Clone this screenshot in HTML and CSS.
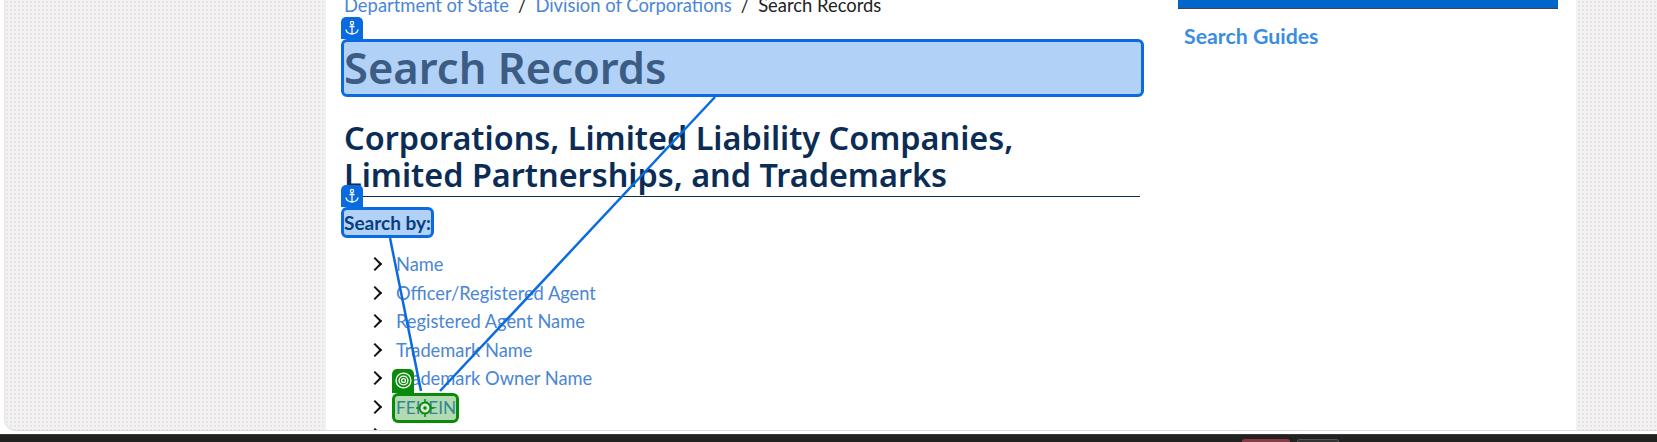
FILE: index.html
```html
<!DOCTYPE html>
<html lang="en">

<head>
    <meta charset="UTF-8">
    <meta name="viewport" content="width=device-width, initial-scale=1.0">
    <title>Search Records</title>
    <link rel="stylesheet" href="styles.css">
</head>

<body>
    <div class="window">
        <div class="page">
            <main class="content">
                <nav class="crumbs">
                    <a href="#">Department of State</a><span class="sep">/</span><a href="#">Division of Corporations</a><span class="sep">/</span><span>Search Records</span>
                </nav>

                <h1 class="title">
                    Search Records
                    <span class="hl hl-blue"></span>
                    <span class="tab tab-blue">
                        <svg viewBox="0 0 16 16" width="16" height="16"><circle cx="8" cy="3" r="1.6" fill="none" stroke="#fff" stroke-width="1.2"/><path d="M8 4.6V14M5.5 6.500h5M2 9.500c.3 2.800 3 4.300 6 4.500 3-.2 5.700-1.700 6-4.500" fill="none" stroke="#fff" stroke-width="1.300"/></svg>
                    </span>
                </h1>

                <h2 class="subtitle">Corporations, Limited Liability Companies,<br>Limited Partnerships, and Trademarks</h2>

                <h3 class="search-by">
                    Search by:
                    <span class="hl hl-blue"></span>
                    <span class="tab tab-blue">
                        <svg viewBox="0 0 16 16" width="16" height="16"><circle cx="8" cy="3" r="1.6" fill="none" stroke="#fff" stroke-width="1.2"/><path d="M8 4.6V14M5.5 6.500h5M2 9.500c.3 2.800 3 4.300 6 4.500 3-.2 5.700-1.700 6-4.500" fill="none" stroke="#fff" stroke-width="1.300"/></svg>
                    </span>
                </h3>

                <ul class="links">
                    <li><a href="#">Name</a></li>
                    <li><a href="#">Officer/Registered Agent</a></li>
                    <li><a href="#">Registered Agent Name</a></li>
                    <li><a href="#">Trademark Name</a></li>
                    <li><a href="#">Trademark Owner Name</a></li>
                    <li>
                        <a href="#" class="target">
                            FEI/EIN
                            <span class="hl hl-green"></span>
                            <span class="tab tab-green">
                                <svg viewBox="0 0 16 16" width="17" height="17" fill="none" stroke="#fff"><circle cx="8" cy="8" r="7" stroke-width="1.200"/><circle cx="8" cy="8" r="4.200" stroke-width="1.200"/><circle cx="8" cy="8" r="1.800" stroke-width="1.200"/></svg>
                            </span>
                            <svg class="cross" viewBox="0 0 18 18" width="18" height="18" fill="none" stroke="#0a8a0a"><circle cx="9" cy="9" r="5.500" fill="#d8ecd8" stroke-width="2"/><circle cx="9" cy="9" r="1.800" fill="#0a8a0a" stroke="none"/><path d="M9 0v3.500M9 14.500V18M0 9h3.500M14.500 9H18" stroke-width="1.500"/></svg>
                        </a>
                    </li>
                    <li></li>
                </ul>
            </main>

            <aside class="side">
                <div class="side-bar"></div>
                <a href="#" class="guides">Search Guides</a>
            </aside>
        </div>

        <svg class="lines" width="1657" height="442">
            <line x1="715" y1="97" x2="440" y2="391"/>
            <line x1="390" y1="238" x2="421" y2="391"/>
        </svg>
    </div>

    <footer class="taskbar">
        <span class="task task-red"></span>
        <span class="task task-dark"></span>
    </footer>
</body>

</html>
```

FILE: styles.css
```css
* {
    margin: 0;
    padding: 0;
    box-sizing: border-box;
}

html,
body {
    height: 442px;
    overflow: hidden;
}

body {
    background: #fff;
    font-family: "Lato", sans-serif;
    display: flex;
    flex-direction: column;
}

a {
    color: #4a86d4;
    text-decoration: none;
}

.window {
    height: 431px;
    margin-left: 4px;
    background-color: #f3f1f1;
    background-image: radial-gradient(#e6e4e4 1px, transparent 1.2px);
    background-size: 4px 4px;
    border-bottom: 1px solid #dcdcdc;
    border-left: 1px solid #e4e4e4;
    border-bottom-left-radius: 12px;
    overflow: hidden;
    padding-left: 321px;
    padding-right: 81px;
}

.page {
    height: 100%;
    background: #fff;
    display: flex;
}

.content {
    width: 826px;
    padding-left: 18px;
    padding-right: 12px;
    margin-top: -7px;
}

.crumbs {
    font-size: 18.400px;
    line-height: 24px;
    color: #222;
}

.sep {
    margin: 0 9px;
}

.title {
    position: relative;
    margin-top: 22px;
    height: 58px;
    font-family: "Noto Sans", sans-serif;
    font-size: 43.500px;
    font-weight: 600;
    line-height: 56px;
    color: #575859;
}

.subtitle {
    margin-top: 22px;
    padding-bottom: 3px;
    border-bottom: 1px solid #0b2d55;
    font-family: "Noto Sans", sans-serif;
    font-size: 32.400px;
    font-weight: 600;
    line-height: 37px;
    color: #0b2d55;
}

.search-by {
    position: relative;
    display: inline-block;
    margin-top: 10px;
    font-size: 19px;
    font-weight: 700;
    line-height: 31px;
    color: #0b2d55;
}

.hl {
    position: absolute;
    inset: 0 -4px 0 -3px;
    border: 3px solid #0a6be0;
    border-radius: 6px;
}

.search-by .hl {
    right: -3px;
}

.hl-blue {
    background: rgba(0, 102, 230, 0.3);
}

.hl-green {
    background: rgba(0, 135, 0, 0.3);
    border-color: #0a8a0a;
}

.tab {
    position: absolute;
    left: -3px;
    bottom: 100%;
    width: 22px;
    height: 22px;
    border-radius: 5px 5px 0 0;
    display: flex;
    align-items: center;
    justify-content: center;
}

.tab-blue {
    background: #0a6be0;
}

.tab-green {
    background: #0a8a0a;
    left: -4px;
    bottom: calc(100% + 1px);
    height: 24px;
}

.links {
    list-style: none;
    margin-top: 12px;
    padding-left: 52px;
}

.links li {
    position: relative;
    height: 28.500px;
    font-size: 18.300px;
    line-height: 28.500px;
}

.links li::before {
    content: "";
    position: absolute;
    left: -26px;
    top: 9px;
    width: 8px;
    height: 8px;
    border-top: 2px solid #111;
    border-right: 2px solid #111;
    transform: rotate(45deg);
}

.target {
    position: relative;
    display: inline-block;
    font-size: 17.200px;
}

.target .hl {
    inset: -1px -3px -1px -4px;
}

.cross {
    position: absolute;
    left: 20px;
    top: 5px;
}

.side {
    width: 380px;
    margin-left: 26px;
}

.side-bar {
    height: 9px;
    background: #0066cc;
    border-bottom: 1px solid #444;
}

.guides {
    display: block;
    margin: 14px 0 0 6px;
    font-size: 21.300px;
    font-weight: 700;
    color: #3b8de0;
}

.lines {
    position: absolute;
    left: 0;
    top: 0;
    pointer-events: none;
}

.lines line {
    stroke: #0a6be0;
    stroke-width: 2.500;
}

.taskbar {
    height: 8px;
    margin-top: 3px;
    background: #222220;
    border-top: 1px solid #3a3a3a;
    padding-left: 1242px;
    display: flex;
    align-items: flex-end;
    gap: 7px;
}

.task {
    height: 3px;
    border-radius: 4px 4px 0 0;
}

.task-red {
    width: 48px;
    background: #8a3a44;
}

.task-dark {
    width: 42px;
    background: #333;
    border: 1px solid #555;
    border-bottom: 0;
}
```
